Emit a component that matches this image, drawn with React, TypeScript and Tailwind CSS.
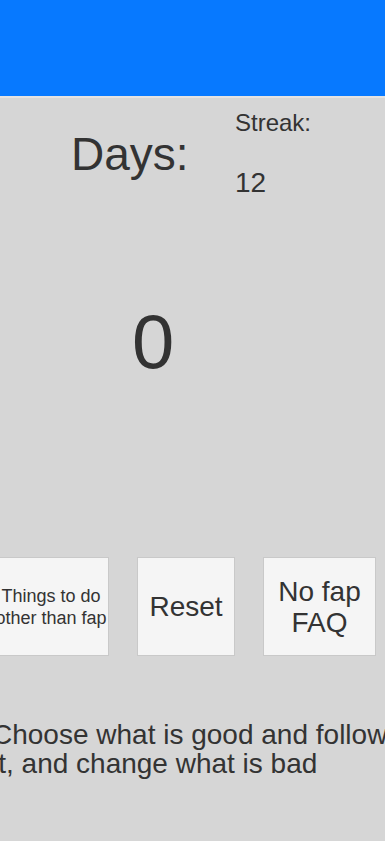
const font = "font-['Liberation_Sans',Arial,sans-serif]";

const Tile = ({ w, size, lead, children }: { w: string; size: string; lead: string; children: React.ReactNode }) => (
  <div
    className={`${w} h-[99px] shrink-0 flex items-center justify-center text-center whitespace-nowrap bg-[#f5f5f5] border border-[#c9c9c9] ${size} ${lead}`}
  >
    <span>{children}</span>
  </div>
);

export default function App() {
  return (
    <div className={`w-[385px] h-[841px] overflow-hidden bg-[#d6d6d6] text-[#333333] ${font}`}>
      <div className="h-[96px] bg-[#0779ff]" />
      <div className="h-[2px] bg-[#e3e3e3]" />

      <div className="flex pt-[13px] pl-[71px]">
        <div className="w-[164px] pt-[20px] text-[46px] leading-none">Days:</div>
        <div>
          <div className="text-[24px] leading-none">Streak:</div>
          <div className="mt-[34px] text-[28px] leading-none">12</div>
        </div>
      </div>

      <div className="mt-[107px] ml-[132px] text-[76px] leading-none">0</div>

      <div className="mt-[177px] -ml-[7px] flex gap-[28px]">
        <Tile w="w-[116px]" size="text-[18px]" lead="leading-[22px]">
          Things to do
          <br />
          other than fap
        </Tile>
        <Tile w="w-[98px]" size="text-[28px]" lead="leading-[30px]">
          Reset
        </Tile>
        <Tile w="w-[113px]" size="text-[28px]" lead="leading-[31px]">
          No fap
          <br />
          FAQ
        </Tile>
      </div>

      <p className="mt-[64px] -ml-[8px] w-[412px] text-[28px] leading-[29px]">
        Choose what is good and follow
        <br />
        it, and change what is bad
      </p>
    </div>
  );
}
